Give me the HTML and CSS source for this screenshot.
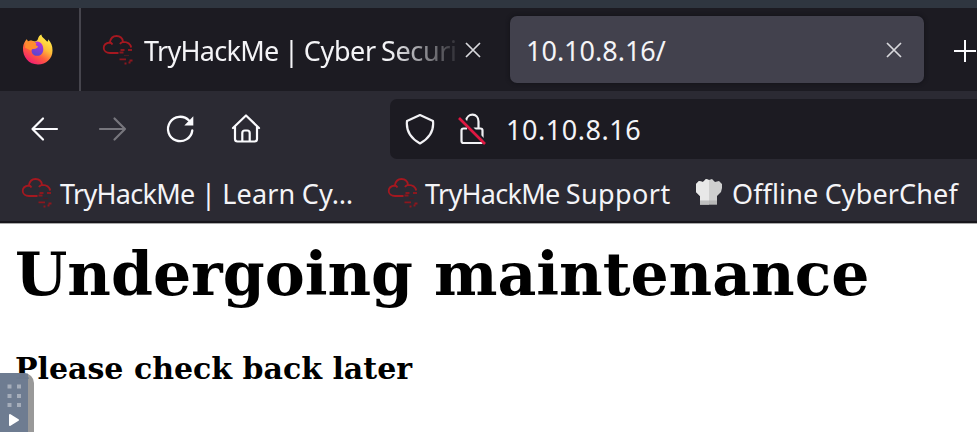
FILE: index.html
```html
<!DOCTYPE html>
<html lang="en">
<head>
<meta charset="utf-8">
<title>10.10.8.16/</title>
<link rel="stylesheet" href="styles.css">
</head>
<body>
<svg width="0" height="0" class="defs" aria-hidden="true">
  <defs>
    <symbol id="cloud" viewBox="0 0 32 32">
      <path d="M16.500 19H8C4.500 19 1.700 17 1.700 14C1.700 10.500 4 9 7.800 8.500C8.500 4.500 11 2 14.500 2C18 2 20.500 4 21 7.800C25.500 7.800 28.500 10 29.200 13.500M7.800 8.500Q9.500 8.700 10.500 10.500M21 7.800Q18.800 8.300 18 10" fill="none" stroke="#a51820" stroke-width="1.800"/>
      <path d="M18.500 16h4M26 16h4M17.500 18.500h4M17.500 25.300h6.500M27.500 26.500h3M22.500 29.500h2M26.500 28.500h2" fill="none" stroke="#8c171e" stroke-width="1.800"/>
      <path d="M22 21.500h5" fill="none" stroke="#4a1b22" stroke-width="1.200"/>
    </symbol>
    <symbol id="close" viewBox="0 0 16 16"><path d="M1 1l14 14M15 1L1 15" fill="none" stroke="#d8d8dc" stroke-width="1.7"/></symbol>
  </defs>
</svg>
<div class="desktop-strip"></div>
<div class="tabs">
  <div class="pinned">
    <svg class="firefox" viewBox="0 0 32 32">
      <defs>
        <linearGradient id="flame" x1=".85" y1=".05" x2=".25" y2="1"><stop offset="0" stop-color="#fff64b"/><stop offset=".38" stop-color="#ffbd38"/><stop offset=".65" stop-color="#ff5c3e"/><stop offset="1" stop-color="#f01678"/></linearGradient>
        <linearGradient id="globe" x1=".6" y1="0" x2=".3" y2="1"><stop offset="0" stop-color="#b833d9"/><stop offset="1" stop-color="#5347cf"/></linearGradient>
      </defs>
      <path fill="url(#flame)" d="M1 14C1.500 10 3 7.500 5 5.500L6 8C8 6.500 10 6.500 12 7.500C15 8 16 7 16.500 5C17 3 18 1.500 20 .5C20.500 4 24 5 26 8C27 7.500 27 6.500 27 5.500C30 9 31.500 12 31.500 17C31.500 25.500 25 31.500 16.500 31.500C7 31.500.500 24 1 14Z"/>
      <path fill="url(#globe)" d="M13 8.500C18 6 22.500 11 22 16.500C21.500 20.500 18.500 23 15.500 22.500C12 22.500 9.500 20 10 16.500C10.500 15.500 11 15.500 12 15.500C14 15.500 16 14.500 16.500 13C15 12.500 13 12 13 8.500Z"/>
      <path fill="#ff8c2e" d="M5 5.500L6 8Q9 6 12 8L15 9.500Q13 11 16.500 13Q15 15 12 15Q9.500 15.500 9 17L3 14Z"/>
    </svg>
  </div>
  <div class="tab">
    <svg class="cloud"><use href="#cloud"/></svg>
    <span class="tab-title fade"><span class="t-cyber"><span class="thm">TryHackMe</span> | Cyber Securi</span></span>
    <svg class="close"><use href="#close"/></svg>
  </div>
  <div class="tab active">
    <span class="tab-title">10.10.8.16/</span>
    <svg class="close"><use href="#close"/></svg>
  </div>
  <svg class="plus" viewBox="0 0 24 24"><path d="M1 12h22M12 1v22" fill="none" stroke="#fbfbfe" stroke-width="2"/></svg>
</div>
<div class="toolbar">
  <svg class="nav back" viewBox="0 0 30 30" fill="none" stroke="#fbfbfe" stroke-width="2.200" stroke-linecap="round" stroke-linejoin="round"><path d="M27 15H3M13 4.500L2.500 15 13 25.500"/></svg>
  <svg class="nav forward" viewBox="0 0 30 30" fill="none" stroke="#77767d" stroke-width="2.200" stroke-linecap="round" stroke-linejoin="round"><path d="M2 15h25M16.500 4.500L27 15 16.500 25.500"/></svg>
  <svg class="nav reload" viewBox="0 0 30 30"><path d="M24 6.500A12.200 12.200 0 1 0 27.300 16.500" fill="none" stroke="#fbfbfe" stroke-width="2.300" stroke-linecap="round"/><path d="M28.300 2.200v9.300h-9z" fill="#fbfbfe"/></svg>
  <svg class="nav home" viewBox="0 0 30 30" fill="none" stroke="#fbfbfe" stroke-width="2.200" stroke-linecap="round" stroke-linejoin="round"><path d="M2 14L15 1.500 28 14M4 12.500V25q0 2.500 2.500 2.500h17q2.500 0 2.500-2.500V12.500M11.300 27v-8q0-2.500 2.500-2.500h2.400q2.500 0 2.500 2.500v8"/></svg>
  <div class="urlbar">
    <svg class="shield" viewBox="0 0 30 32"><path d="M15 2L28 8C29 17 25 25 15 30.500C5 25 1 17 2 8Z" fill="none" stroke="#f2f2f5" stroke-width="2.200" stroke-linejoin="round"/></svg>
    <svg class="lock" viewBox="0 0 28 32"><path d="M8 8C9 -.5 20.500 -.5 20.500 8.500V15.500M9 15.500H5.500q-2 0-2 2V28q0 2 2 2h17q2 0 2-2V17.500q0-2-2-2h-7" fill="none" stroke="#f2f2f5" stroke-width="2.200"/><path d="M3.500 4L28 29" stroke="#1c1b22" stroke-width="2.500"/><path d="M1 5L27 31" stroke="#df1741" stroke-width="2.600"/></svg>
    <span class="url">10.10.8.16</span>
  </div>
</div>
<div class="bookmarks">
  <svg class="cloud"><use href="#cloud"/></svg><span class="bm learn"><span class="thm">TryHackMe</span> | Learn Cy…</span>
  <svg class="cloud"><use href="#cloud"/></svg><span class="bm support"><span class="thm">TryHackMe</span> <span class="wide">Support</span></span>
  <svg class="chef" viewBox="0 0 28 28"><path d="M5 26.500V18L1 14V6L4 3l4 1 3-3 3 1 3-1 3 3 4-1 3 3v4l-1 4-4 4v8.500z" fill="#cfcfcf"/><path d="M5 26.500V18L1 14V6L4 3l4 1 3-3 3 1v24.500z" fill="#e8e8e8"/><path d="M5 22.500h17v4H5z" fill="#aaa" opacity=".65"/></svg><span class="bm chef-label">Offline CyberChef</span>
</div>
<main>
  <h1>Undergoing maintenance</h1>
  <h4>Please check back later</h4>
</main>
<div class="dock">
  <div class="dock-face">
    <svg width="28" height="59" viewBox="0 0 28 59"><path d="M7.500 11.500h4v4h-4zM17 11.500h4v4h-4zM7.500 21h4v4h-4zM17 21h4v4h-4zM7.500 30h4v4h-4zM17 30h4v4h-4z" fill="#a5adba"/><path d="M10 42l8 5-8 5z" fill="#fff" stroke="#fff" stroke-width="2" stroke-linejoin="round"/></svg>
  </div>
</div>
</body>
</html>
```
FILE: styles.css
```css
* { box-sizing: border-box; }
body { margin: 0; height: 432px; overflow: hidden; background: #fff; color: #f4f4f7; font: 27px/36px "Noto Sans", "Open Sans", sans-serif; }
svg { display: block; flex: none; }
.defs { position: absolute; }
.desktop-strip { height: 8px; background: #2f3640; }
.tabs { display: flex; height: 83px; background: #1c1b22; align-items: center; overflow: hidden; }
.pinned { width: 81px; height: 83px; flex: none; border-right: 2px solid #46454d; padding: 26px 0 0 22px; }
.firefox { width: 31px; height: 31px; }
.tab { width: 429px; height: 67px; flex: none; display: flex; align-items: center; padding-left: 21px; }
.tab.active { width: 414px; background: #42414d; border-radius: 7px; padding-left: 16px; box-shadow: 0 0 4px #111116; }
.cloud { width: 32px; height: 32px; }
.tab .cloud { margin-right: 10px; }
.bookmarks .cloud { margin-top: 2px; }
.tab-title { width: 316px; padding-top: 2px; white-space: nowrap; }
.active .tab-title { width: 361px; }
.fade { mask-image: linear-gradient(to right, #000 78%, transparent 101%); }
.t-cyber { letter-spacing: -.4px; word-spacing: -1.200px; }
.thm { letter-spacing: -.7px; }
.wide { letter-spacing: .4px; }
.close { width: 16px; height: 16px; margin-left: 5px; }
.active .close { margin-left: -1px; }
.plus { width: 24px; height: 24px; margin: 2px 0 0 29px; }
.toolbar { height: 72px; background: #2b2a33; display: flex; padding-top: 8px; }
.nav { width: 30px; height: 30px; margin-top: 15px; }
.back { margin-left: 30px; }
.forward { margin-left: 38px; }
.reload { margin-left: 37px; }
.home { margin-left: 36px; }
.urlbar { flex: 1; height: 60px; margin-left: 129px; padding-left: 15px; border-radius: 7px 0 0 7px; background: #1c1b22; display: flex; align-items: center; }
.shield { width: 30px; height: 32px; margin-top: -1px; }
.lock { width: 28px; height: 32px; margin: -1px 0 0 23px; }
.url { margin-left: 20px; padding-top: 2px; letter-spacing: .55px; white-space: nowrap; }
.bookmarks { height: 60px; background: #2b2a33; border-bottom: 2px solid #17161b; box-shadow: 0 1px #aaa; display: flex; align-items: center; padding-left: 21px; white-space: nowrap; }
.bm { flex: none; margin-left: 7px; padding-top: 3px; word-spacing: -.8px; }
.learn { width: 327px; letter-spacing: .15px; }
.support { width: 270px; margin-left: 6px; }
.chef { width: 28px; height: 28px; margin-top: -1px; }
.chef-label { margin-left: 9px; letter-spacing: .12px; }
main { color: #000; font-family: "DejaVu Serif", serif; padding: 15px 15px 0; white-space: nowrap; }
h1 { margin: 0; font-size: 60px; line-height: 72px; }
h4 { margin: 41px 0 0; font-size: 30px; line-height: 36px; }
.dock { position: absolute; left: 0; top: 373px; width: 34px; height: 59px; background: #7f7f7fcc; border-radius: 0 10px 0 0; overflow: hidden; }
.dock-face { width: 28px; height: 59px; background: #6b7a90f0; }
```
